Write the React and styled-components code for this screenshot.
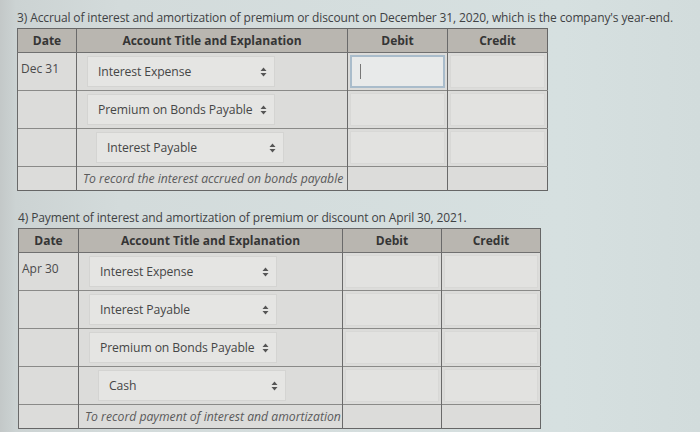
import React from "react";
import styled, { createGlobalStyle } from "styled-components";

const GlobalStyle = createGlobalStyle`
  html, body {
    margin: 0;
    padding: 0;
  }
  body {
    width: 700px;
    height: 432px;
    overflow: hidden;
    font-family: "Open Sans", "Liberation Sans", sans-serif;
    background: linear-gradient(90deg, #c3c8c8 0px, #ccd3d3 16px, #d3dbdb 120px, #d6e0e0 560px, #d2dcdc 700px);
  }
`;

const Page = styled.div`
  padding: 9px 0 0 17px;
`;

const Section = styled.section`
  margin-left: ${(p) => p.$indent || 0}px;
  margin-bottom: ${(p) => p.$gap || 0}px;
`;

const Heading = styled.div`
  font-size: 12px;
  line-height: 18px;
  color: #3f4244;
  letter-spacing: -0.12px;
  white-space: nowrap;
`;

const Table = styled.table`
  border-collapse: collapse;
  table-layout: fixed;
  width: ${(p) => p.$width}px;
  border: 1px solid #666;
  background: #dcdcda;
  margin-top: 1px;
`;

const HeadCell = styled.th`
  background: #b9b6b0;
  color: #353535;
  font-size: 12px;
  font-weight: 700;
  height: 23px;
  padding: 0;
  text-align: center;
  border-left: 1px solid #6a6a6a;
  border-bottom: 1px solid #707070;
`;

const Cell = styled.td`
  height: ${(p) => (p.$short ? 23 : 37)}px;
  padding: 0;
  vertical-align: middle;
  border-left: 1px solid #6a6a6a;
  border-top: 1px solid #8a8a88;
  font-size: 12.5px;
  color: #444;
  overflow: hidden;
`;

const DateText = styled.div`
  padding: 0 0 6px 3px;
  font-size: 12px;
  color: #4a4a4a;
`;

const Select = styled.div`
  display: flex;
  align-items: center;
  justify-content: space-between;
  box-sizing: border-box;
  width: 188px;
  height: 31px;
  margin-left: ${(p) => (p.$credit ? 19 : 10)}px;
  padding: 0 7px 0 10px;
  background: #e5e5e3;
  border: 1px solid #d4d4d2;
  color: #464646;
  font-size: 12.2px;
  letter-spacing: -0.1px;
`;

const Arrows = styled.svg`
  width: 7px;
  height: 10px;
  flex: none;
`;

const Explanation = styled.div`
  padding-left: 6px;
  font-style: italic;
  font-size: 12.2px;
  color: #5a5a5a;
  white-space: nowrap;
`;

const Amount = styled.div`
  box-sizing: border-box;
  margin: 2px;
  height: 33px;
  background: ${(p) => (p.$focus ? "#e8eaea" : "#e2e2e0")};
  border: ${(p) => (p.$focus ? "2px solid #a9bccb" : "1px solid #d8d8d6")};
  display: flex;
  align-items: center;
  padding-left: 8px;
`;

const Caret = styled.span`
  width: 1px;
  height: 15px;
  background: #777;
`;

const UpDown = () => (
  <Arrows viewBox="0 0 7 10">
    <path d="M3.5 0.5 L6.5 4 L0.5 4 Z M3.5 9.5 L6.5 6 L0.5 6 Z" fill="#555" />
  </Arrows>
);

const Header = ({ widths }) => (
  <>
    <colgroup>
      {widths.map((w, i) => (
        <col key={i} style={{ width: w }} />
      ))}
    </colgroup>
    <thead>
      <tr>
        <HeadCell>Date</HeadCell>
        <HeadCell>Account Title and Explanation</HeadCell>
        <HeadCell>Debit</HeadCell>
        <HeadCell>Credit</HeadCell>
      </tr>
    </thead>
  </>
);

const EntryRow = ({ date, account, credit, focus }) => (
  <tr>
    <Cell>{date && <DateText>{date}</DateText>}</Cell>
    <Cell>
      <Select $credit={credit}>
        <span>{account}</span>
        <UpDown />
      </Select>
    </Cell>
    <Cell>
      <Amount $focus={focus}>{focus && <Caret />}</Amount>
    </Cell>
    <Cell>
      <Amount />
    </Cell>
  </tr>
);

const NoteRow = ({ text }) => (
  <tr>
    <Cell $short />
    <Cell $short>
      <Explanation>{text}</Explanation>
    </Cell>
    <Cell $short />
    <Cell $short />
  </tr>
);

const Journal = ({ widths, lines, note }) => (
  <Table $width={widths.reduce((a, b) => a + b, 0)}>
    <Header widths={widths} />
    <tbody>
      {lines.map((l, i) => (
        <EntryRow key={i} {...l} />
      ))}
      <NoteRow text={note} />
    </tbody>
  </Table>
);

export default function App() {
  return (
    <>
      <GlobalStyle />
      <Page>
        <Section $gap={18}>
          <Heading>
            3) Accrual of interest and amortization of premium or discount on December 31, 2020, which is the company's year-end.
          </Heading>
          <Journal
            widths={[59, 271, 100, 100]}
            lines={[
              { date: "Dec 31", account: "Interest Expense", focus: true },
              { account: "Premium on Bonds Payable" },
              { account: "Interest Payable", credit: true },
            ]}
            note="To record the interest accrued on bonds payable"
          />
        </Section>
        <Section $indent={1}>
          <Heading>4) Payment of interest and amortization of premium or discount on April 30, 2021.</Heading>
          <Journal
            widths={[60, 264, 99, 99]}
            lines={[
              { date: "Apr 30", account: "Interest Expense" },
              { account: "Interest Payable" },
              { account: "Premium on Bonds Payable" },
              { account: "Cash", credit: true },
            ]}
            note="To record payment of interest and amortization"
          />
        </Section>
      </Page>
    </>
  );
}
